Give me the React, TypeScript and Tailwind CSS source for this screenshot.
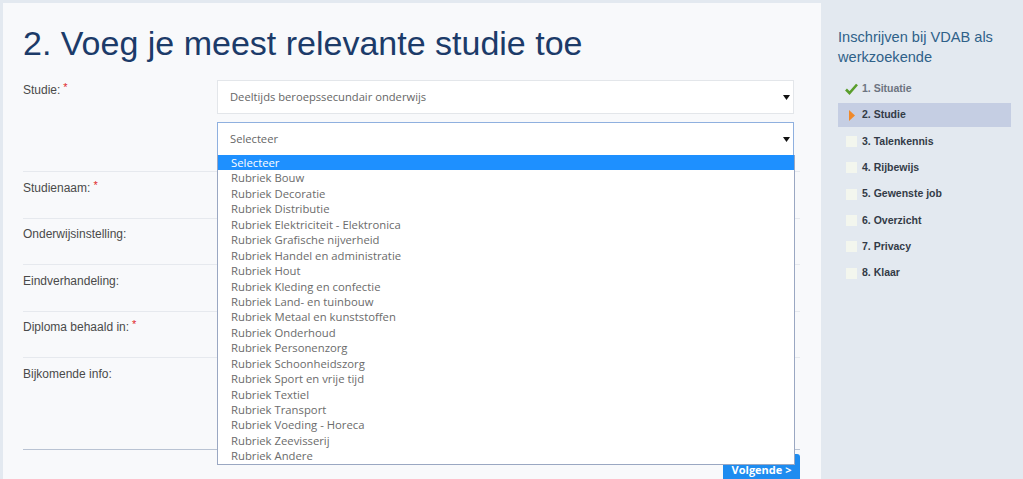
import React from "react";

const options = [
  "Selecteer",
  "Rubriek Bouw",
  "Rubriek Decoratie",
  "Rubriek Distributie",
  "Rubriek Elektriciteit - Elektronica",
  "Rubriek Grafische nijverheid",
  "Rubriek Handel en administratie",
  "Rubriek Hout",
  "Rubriek Kleding en confectie",
  "Rubriek Land- en tuinbouw",
  "Rubriek Metaal en kunststoffen",
  "Rubriek Onderhoud",
  "Rubriek Personenzorg",
  "Rubriek Schoonheidszorg",
  "Rubriek Sport en vrije tijd",
  "Rubriek Textiel",
  "Rubriek Transport",
  "Rubriek Voeding - Horeca",
  "Rubriek Zeevisserij",
  "Rubriek Andere",
];

const steps = [
  { label: "1. Situatie", state: "done" },
  { label: "2. Studie", state: "active" },
  { label: "3. Talenkennis", state: "todo" },
  { label: "4. Rijbewijs", state: "todo" },
  { label: "5. Gewenste job", state: "todo" },
  { label: "6. Overzicht", state: "todo" },
  { label: "7. Privacy", state: "todo" },
  { label: "8. Klaar", state: "todo" },
];

const rows = [
  { label: "Studienaam:", required: true },
  { label: "Onderwijsinstelling:", required: false },
  { label: "Eindverhandeling:", required: false },
  { label: "Diploma behaald in:", required: true },
];

const Arrow = () => (
  <svg width="7" height="5" viewBox="0 0 7 5" className="shrink-0">
    <polygon points="0,0 7,0 3.5,5" fill="#111" />
  </svg>
);

const Label = ({ text, required }: { text: string; required?: boolean }) => (
  <div className="w-[194px] shrink-0 text-[12px] leading-[16px] text-[#4a4a4a]">
    {text}
    {required && (
      <span className="relative -top-[3px] ml-[3px] text-[11px] text-[#e0262b]">*</span>
    )}
  </div>
);

const App = () => {
  return (
    <div
      className="flex h-[479px] w-full overflow-hidden bg-[#e3e9f0]"
      style={{ fontFamily: '"Liberation Sans", Arial, sans-serif' }}
    >
      {/* main form panel */}
      <div className="ml-[3px] mt-[3px] w-[818px] shrink-0 bg-[#f8f9fb] pl-[20px] pr-[21px] pt-[23px]">
        <h1 className="mb-[13px] text-[34px] leading-[34px] font-normal text-[#1c3b69]">
          2. Voeg je meest relevante studie toe
        </h1>

        {/* Studie */}
        <div className="flex pt-[7px] pb-[15px]">
          <div className="pt-[2px]">
            <Label text="Studie:" required />
          </div>
          <div className="flex w-[577px] flex-col gap-[8px]">
            <div className="flex h-[34px] items-center justify-between border border-[#e3e6ea] bg-white pl-[12px] pr-[3px]">
              <span
                className="text-[11.2px] text-[#666]"
                style={{ fontFamily: '"Open Sans", sans-serif' }}
              >
                Deeltijds beroepssecundair onderwijs
              </span>
              <Arrow />
            </div>
            <div className="relative flex h-[34px] items-center justify-between border border-[#8fb0df] bg-white pl-[12px] pr-[3px]">
              <span
                className="text-[11.2px] text-[#666]"
                style={{ fontFamily: '"Open Sans", sans-serif' }}
              >
                Selecteer
              </span>
              <Arrow />
              {/* open option list */}
              <div
                className="absolute left-[-1px] top-full z-10 w-[578px] border border-t-0 border-[#9aa7c2] bg-white"
                style={{ fontFamily: '"Open Sans", sans-serif' }}
              >
                {options.map((o, i) => (
                  <div
                    key={o}
                    className={
                      i === 0
                        ? "h-[15.45px] bg-[#1e90ff] pl-[13px] text-[11.3px] leading-[16px] text-white"
                        : "h-[15.45px] pl-[13px] text-[11.3px] leading-[16px] text-[#6b6b6b]"
                    }
                  >
                    {o}
                  </div>
                ))}
              </div>
            </div>
          </div>
        </div>

        {rows.map((r) => (
          <div key={r.label} className="flex h-[46.5px] border-t border-[#e6e9ee] pt-[7.5px]">
            <Label text={r.label} required={r.required} />
          </div>
        ))}
        <div className="flex h-[91.5px] border-t border-[#e6e9ee] pt-[7.5px]">
          <Label text="Bijkomende info:" />
        </div>

        <div className="border-t border-[#b9c3d3]" />
        <div className="flex justify-end pt-[4px]">
          <button
            className="h-[32px] w-[77px] rounded-t-[3px] bg-[#1e8cf0] pt-[1px] text-[11px] font-bold text-white"
            style={{ fontFamily: '"Open Sans", sans-serif' }}
          >
            Volgende &gt;
          </button>
        </div>
      </div>

      {/* sidebar */}
      <div className="flex-1 pl-[17px] pr-[12px] pt-[27px]">
        <h2 className="text-[14.6px] leading-[20px] font-normal text-[#2f6189]">
          Inschrijven bij VDAB als werkzoekende
        </h2>
        <ul className="mt-[10px] flex flex-col gap-[2.3px]">
          {steps.map((s) => (
            <li
              key={s.label}
              className={
                s.state === "active"
                  ? "flex h-[24px] items-center gap-[5px] bg-[#c5cee3] pl-[8px]"
                  : "flex h-[24px] items-center gap-[5px] pl-[8px]"
              }
            >
              <span className="flex h-[11px] w-[11px] items-center justify-center">
                {s.state === "done" && (
                  <svg width="13" height="12" viewBox="0 0 13 12" className="shrink-0">
                    <path d="M1 6.5 L4.5 10 L12 1.5" fill="none" stroke="#5a9e2c" strokeWidth="2.6" />
                  </svg>
                )}
                {s.state === "active" && (
                  <svg width="6" height="11" viewBox="0 0 6 11">
                    <polygon points="0,0 6,5.5 0,11" fill="#f0892a" />
                  </svg>
                )}
                {s.state === "todo" && <span className="h-[11px] w-[11px] bg-[#f3f6ee]" />}
              </span>
              <span
                className={
                  s.state === "done"
                    ? "text-[10.5px] font-bold text-[#6c7480]"
                    : "text-[10.5px] font-bold text-[#333b47]"
                }
              >
                {s.label}
              </span>
            </li>
          ))}
        </ul>
      </div>
    </div>
  );
};

export default App;
